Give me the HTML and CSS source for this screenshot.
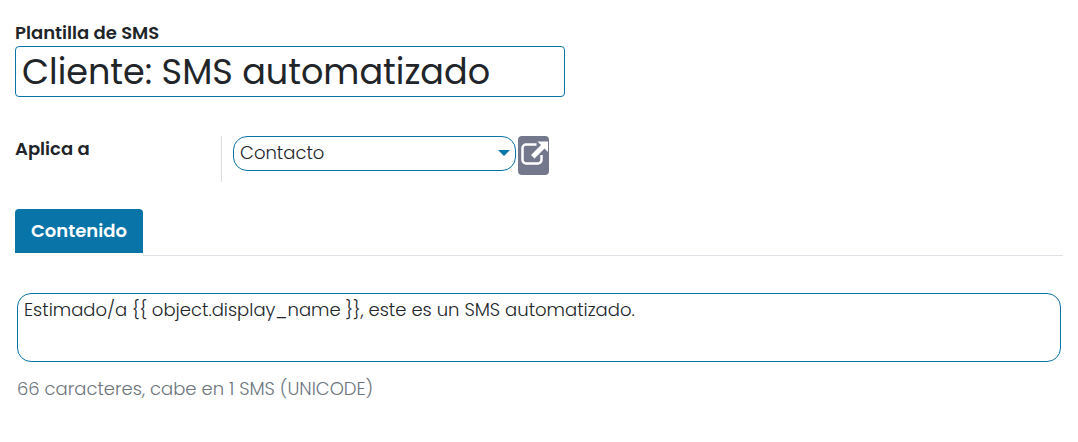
FILE: index.html
```html
<!DOCTYPE html>
<html lang="es">
<head>
<meta charset="utf-8">
<meta name="viewport" content="width=device-width, initial-scale=1">
<title>Plantilla de SMS</title>
<link rel="stylesheet" href="styles.css">
</head>
<body>
<form class="sheet">
  <div class="title">
    <label class="label" for="name">Plantilla de SMS</label>
    <input class="title-input" id="name" type="text" value="Cliente: SMS automatizado">
  </div>
  <div class="group">
    <label class="label group-label" for="model">Aplica a</label>
    <div class="group-field">
      <div class="select-wrap">
        <select class="select" id="model"><option>Contacto</option></select>
        <svg class="caret" viewBox="0 0 12 6" aria-hidden="true"><path d="M0 0h12L6 6z"/></svg>
      </div>
      <button class="open" type="button" aria-label="Abrir registro">
        <svg class="open-icon" viewBox="0 0 28 28" aria-hidden="true"><path d="M16.500 5.500H6a3.500 3.500 0 0 0-3.500 3.500v12A3.500 3.500 0 0 0 6 24.500h12a3.500 3.500 0 0 0 3.500-3.500v-5" fill="none" stroke="currentColor" stroke-width="2.500"/><path d="M17.500 2.500H28V13l-3.500-3.500L14.500 19.500 11 16 21 6z" fill="currentColor"/></svg>
      </button>
    </div>
  </div>
  <div class="tabs" role="tablist"><button class="tab" type="button" role="tab" aria-selected="true">Contenido</button></div>
  <div class="panel" role="tabpanel">
    <textarea class="body-input" aria-label="Contenido">Estimado/a {{ object.display_name }}, este es un SMS automatizado.</textarea>
    <p class="hint">66 caracteres, cabe en 1 SMS (UNICODE)</p>
  </div>
</form>
</body>
</html>
```
FILE: styles.css
```css
* { box-sizing: border-box; }
body { margin: 0; background: #fff; color: #212529; font: 300 18px/24px Poppins, Inter, "Open Sans", sans-serif; }
input, select, textarea, button { font: inherit; color: inherit; margin: 0; }
.sheet { padding: 21px 15px; }
.title { display: flex; flex-direction: column; gap: 1px; margin-bottom: 39px; }
.label { font-weight: 600; }
.title-input { width: 100%; max-width: 550px; height: 51px; padding: 0 6px; font-size: 35px; font-weight: 400; line-height: 48px; border: 1px solid #0874a8; border-radius: 4px; background: #fff; }
.group { display: flex; height: 46px; margin-bottom: 27px; }
.group-label { width: 207px; padding-top: 1px; border-right: 1px solid #ddd; }
.group-field { display: flex; gap: 2px; padding-left: 11px; }
.select-wrap { position: relative; width: 283px; }
.select { appearance: none; width: 100%; height: 35px; padding: 0 6px 2px; border: 1px solid #0874a8; border-radius: 14px; background: #fff; }
.caret { position: absolute; right: 6px; top: 14px; width: 12px; height: 6px; fill: #0874a8; }
.open { display: flex; align-items: flex-start; justify-content: center; width: 31px; height: 39px; padding: 3px 0 0; border: 0; border-radius: 4px; background: #74788d; color: #fff; }
.open-icon { width: 28px; height: 28px; }
.tabs { display: flex; }
.tabs::after { content: ""; flex: 1; border-bottom: 1px solid #dee2e6; }
.tab { height: 44px; margin-bottom: 3px; padding: 0 16px; border: 0; border-radius: 4px 4px 0 0; background: #0874a8; color: #fff; font-weight: 600; }
.panel { padding: 37px 2px 0; }
.body-input { display: block; width: 100%; height: 69px; padding: 4px 6px; border: 1px solid #0874a8; border-radius: 14px; resize: none; }
.hint { margin: 15px 0 0; color: #6c757d; }
```
